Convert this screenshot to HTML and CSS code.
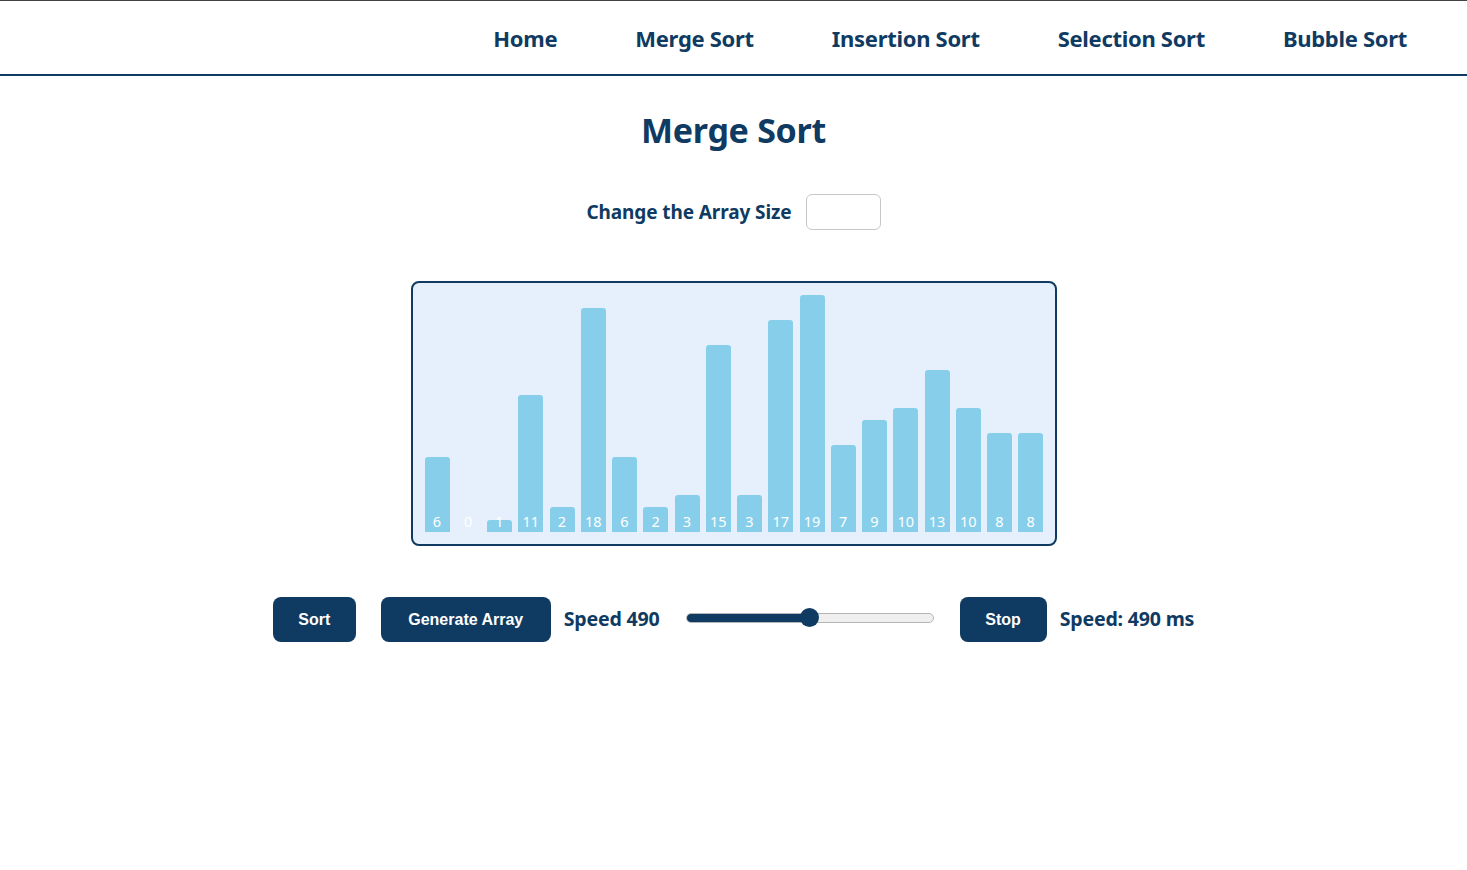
FILE: index.html
```html
<!DOCTYPE html>
<html>
<head>
<meta charset="utf-8">
<link rel="stylesheet" href="styles.css">
</head>
<body>
<nav class="nav">
  <a class="nav-link" href="#">Home</a>
  <a class="nav-link" href="#">Merge Sort</a>
  <a class="nav-link" href="#">Insertion Sort</a>
  <a class="nav-link" href="#">Selection Sort</a>
  <a class="nav-link" href="#">Bubble Sort</a>
</nav>
<main class="main">
  <h1 class="title">Merge Sort</h1>
  <div class="size-row">
    <label class="size-label">Change the Array Size</label>
    <input class="size-input" type="text">
  </div>
  <div class="chart">
    <div class="bar" style="height:75px"><span>6</span></div>
    <div class="bar" style="height:0px"><span>0</span></div>
    <div class="bar" style="height:12px"><span>1</span></div>
    <div class="bar" style="height:137px"><span>11</span></div>
    <div class="bar" style="height:25px"><span>2</span></div>
    <div class="bar" style="height:224px"><span>18</span></div>
    <div class="bar" style="height:75px"><span>6</span></div>
    <div class="bar" style="height:25px"><span>2</span></div>
    <div class="bar" style="height:37px"><span>3</span></div>
    <div class="bar" style="height:187px"><span>15</span></div>
    <div class="bar" style="height:37px"><span>3</span></div>
    <div class="bar" style="height:212px"><span>17</span></div>
    <div class="bar" style="height:237px"><span>19</span></div>
    <div class="bar" style="height:87px"><span>7</span></div>
    <div class="bar" style="height:112px"><span>9</span></div>
    <div class="bar" style="height:124px"><span>10</span></div>
    <div class="bar" style="height:162px"><span>13</span></div>
    <div class="bar" style="height:124px"><span>10</span></div>
    <div class="bar" style="height:99px"><span>8</span></div>
    <div class="bar" style="height:99px"><span>8</span></div>
  </div>
  <div class="controls">
    <button class="btn btn-sort">Sort</button>
    <button class="btn btn-gen">Generate Array</button>
    <span class="speed-text">Speed 490</span>
    <input class="slider" type="range" min="0" max="980" value="490">
    <button class="btn btn-stop">Stop</button>
    <span class="speed-text speed-ms">Speed: 490 ms</span>
  </div>
</main>
</body>
</html>
```
FILE: styles.css
```css
* { box-sizing: border-box; }
body {
  margin: 0;
  background: #fff;
  font-family: "Noto Sans", "Open Sans", sans-serif;
  color: #0f3a62;
}
.nav {
  display: flex;
  justify-content: flex-end;
  align-items: center;
  gap: 78px;
  height: 76px;
  padding-right: 60px;
  padding-top: 0;
  border-top: 1px solid #444;
  border-bottom: 2px solid #0f3a62;
}
.nav-link {
  color: #0f3a62;
  text-decoration: none;
  font-weight: 700;
  font-size: 22px;
  letter-spacing: -0.3px;
}
.main {
  display: flex;
  flex-direction: column;
  align-items: center;
}
.title {
  margin: 31px 0 0;
  font-size: 34px;
  font-weight: 700;
  line-height: 46px;
  letter-spacing: -0.3px;
}
.size-row {
  display: flex;
  align-items: center;
  gap: 14px;
  margin-top: 41px;
}
.size-label {
  font-size: 19px;
  font-weight: 700;
  letter-spacing: -0.1px;
}
.size-input {
  width: 75px;
  height: 36px;
  border: 1px solid #c8c8c8;
  border-radius: 6px;
  background: #fff;
}
.chart {
  display: flex;
  align-items: flex-end;
  gap: 6.26px;
  width: 646px;
  height: 265px;
  margin-top: 51px;
  padding: 0 11px 12px 12px;
  background: #e6f0fd;
  border: 2px solid #0f3a62;
  border-radius: 8px;
}
.bar {
  position: relative;
  width: 25px;
  flex: none;
  background: #87ceeb;
  border-radius: 3px 3px 0 0;
}
.bar span {
  position: absolute;
  left: 0;
  right: 0;
  bottom: 1px;
  text-align: center;
  color: #fff;
  font-size: 14.5px;
  line-height: 20px;
}
.controls {
  display: flex;
  align-items: center;
  margin-top: 51px;
}
.btn {
  height: 45px;
  padding: 0;
  border: none;
  border-radius: 8px;
  background: #0f3a62;
  color: #fff;
  font-family: "Liberation Sans", Arial, sans-serif;
  font-weight: 700;
  font-size: 16px;
}
.btn-sort { width: 83px; }
.btn-gen { width: 170px; margin-left: 25px; }
.btn-stop { width: 87px; margin-left: 26px; }
.speed-text {
  margin-left: 13px;
  margin-bottom: 3px;
  font-size: 19.6px;
  font-weight: 700;
  letter-spacing: -0.2px;
}
.slider {
  -webkit-appearance: none;
  appearance: none;
  width: 248px;
  height: 10px;
  margin: 0 0 4px 26px;
  border: 1px solid #b5b5b5;
  border-radius: 5px;
  background: linear-gradient(to right, #0f3a62 0 50%, #efefef 50% 100%);
}
.slider::-webkit-slider-thumb {
  -webkit-appearance: none;
  appearance: none;
  width: 19px;
  height: 19px;
  border-radius: 50%;
  background: #0f3a62;
  border: none;
}
```
